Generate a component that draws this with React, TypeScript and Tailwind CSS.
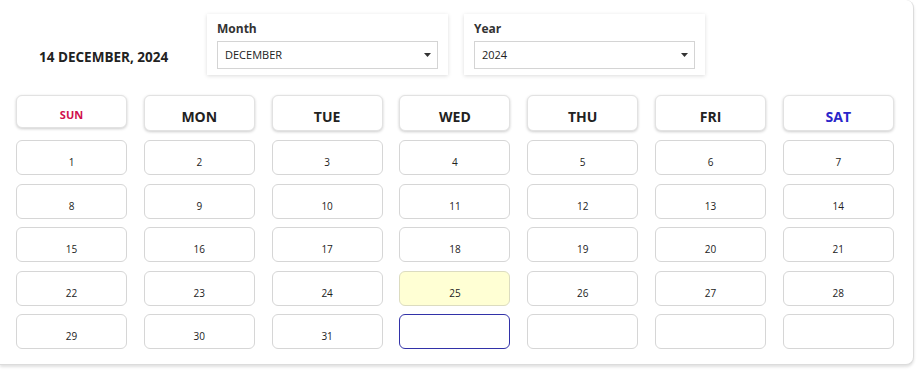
import React from "react";

const heads = [
  { t: "SUN", c: "text-[#d0104c] text-[11px] h-[33px] pt-[8px]" },
  { t: "MON", c: "text-[#222] text-[14px] h-[36px] pt-[6px]" },
  { t: "TUE", c: "text-[#222] text-[14px] h-[36px] pt-[6px]" },
  { t: "WED", c: "text-[#222] text-[14px] h-[36px] pt-[6px]" },
  { t: "THU", c: "text-[#222] text-[14px] h-[36px] pt-[6px]" },
  { t: "FRI", c: "text-[#222] text-[14px] h-[36px] pt-[6px]" },
  { t: "SAT", c: "text-[#2a26c9] text-[14px] h-[36px] pt-[6px]" },
];

function Select({ label, value }: { label: string; value: string }) {
  return (
    <div className="w-[241px] h-[61px] bg-white shadow-[0_1px_4px_rgba(0,0,0,0.14)] px-[10px] pt-[7px]">
      <div className="text-[12px] font-bold text-[#333] leading-[16px]">{label}</div>
      <div className="mt-[4px] h-[28px] border border-[#d4d4d4] flex items-center justify-between pl-[7px] pr-[6px]">
        <span className="text-[11px] text-[#222]">{value}</span>
        <svg width="7" height="4" viewBox="0 0 7 4"><path d="M0 0h7L3.5 4z" fill="#333" /></svg>
      </div>
    </div>
  );
}

export default function App() {
  const cells: (number | null)[] = [];
  for (let i = 1; i <= 31; i++) cells.push(i);
  while (cells.length < 35) cells.push(null);
  return (
    <div className="w-[918px] h-[378px] bg-white font-['Open_Sans',sans-serif]">
      <div className="w-[914px] h-[365px] bg-white border-r border-b border-[#dcdcdc] rounded-r-[8px] shadow-[0_2px_3px_rgba(0,0,0,0.12)]">
        <div className="flex items-start pt-[14px]">
          <div className="pl-[39px] w-[207px] mt-[34px] text-[13.5px] font-bold text-[#222] leading-[18px] whitespace-nowrap">
            14 DECEMBER, 2024
          </div>
          <Select label="Month" value="DECEMBER" />
          <div className="w-[16px]" />
          <Select label="Year" value="2024" />
        </div>
        <div className="pl-[16px] mt-[20px] grid grid-cols-[repeat(7,111px)] gap-x-[16.8px] items-start">
          {heads.map((h) => (
            <div
              key={h.t}
              className={`${h.c} bg-white rounded-[6px] border border-[#e2e2e2] shadow-[0_1px_3px_rgba(0,0,0,0.2)] flex items-center justify-center font-bold`}
            >
              {h.t}
            </div>
          ))}
        </div>
        <div className="pl-[16px] mt-[9px] grid grid-cols-[repeat(7,111px)] gap-x-[16.8px] gap-y-[8.6px]">
          {cells.map((d, i) => {
            let cls = "border-[#d6d6d6] bg-white";
            if (d === 25) cls = "border-[#dcdcc0] bg-[#ffffd4]";
            if (i === 31) cls = "border-[#3232a8] bg-white";
            return (
              <div
                key={i}
                className={`h-[35px] rounded-[6px] border ${cls} flex items-center justify-center pt-[10px] text-[10px] text-[#222]`}
              >
                {d ?? ""}
              </div>
            );
          })}
        </div>
      </div>
    </div>
  );
}
